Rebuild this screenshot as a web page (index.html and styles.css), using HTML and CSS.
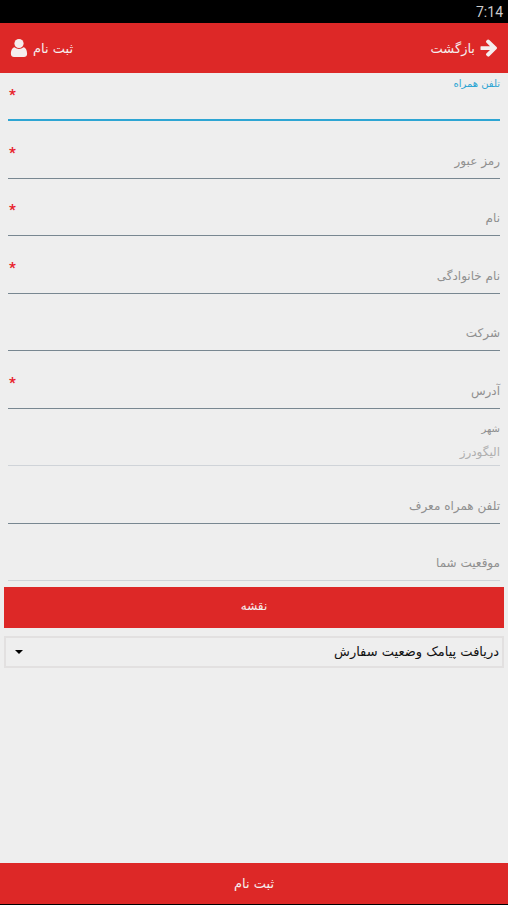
FILE: index.html
```
<!DOCTYPE html>
<html lang="fa" dir="rtl">
<head>
  <meta charset="UTF-8" />
  <meta name="viewport" content="width=device-width, initial-scale=1" />
  <title>ثبت نام</title>
  <link rel="stylesheet" href="styles.css">
</head>
<body>
  <div class="status-bar">7:14</div>

  <header>
    <a class="header-link" href="#back">
      <svg class="icon" viewBox="0 0 18 20" aria-hidden="true">
        <path d="M1 8.200H10L6.300 4.600Q5.600 3.700 6.300 2.800L7.400 1.800Q8.400 1.200 9.300 2L16.600 9.100Q17.500 10 16.600 11L9.300 18.200Q8.400 19 7.400 18.300L6.300 17.200Q5.600 16.300 6.300 15.400L10 12H1Q0.500 12 0.500 11.500V8.700Q0.500 8.200 1 8.200Z" fill="currentColor" />
      </svg>
      <span>بازگشت</span>
    </a>
    <h1 class="header-title">
      <span>ثبت نام</span>
      <svg class="icon" viewBox="0 0 18 20" aria-hidden="true">
        <path fill="currentColor" d="M4.600 9.200C2 9.600 0.900 12.500 0.900 15.800C0.900 18 2.300 18.900 4 18.900H14C15.700 18.900 17.100 18 17.100 15.800C17.100 12.500 16 9.600 13.400 9.200C12 10.300 10.600 10.900 9 10.900S6 10.300 4.600 9.200Z" />
        <circle cx="9" cy="5.500" r="4.600" fill="currentColor" />
      </svg>
    </h1>
  </header>

  <form id="register">
    <div class="fields">
      <div class="field active required">
        <label for="mobile">تلفن همراه</label>
        <input type="tel" id="mobile" />
      </div>
      <div class="field required">
        <label for="password">رمز عبور</label>
        <input type="password" id="password" />
      </div>
      <div class="field required">
        <label for="first-name">نام</label>
        <input type="text" id="first-name" />
      </div>
      <div class="field required">
        <label for="last-name">نام خانوادگی</label>
        <input type="text" id="last-name" />
      </div>
      <div class="field">
        <label for="company">شرکت</label>
        <input type="text" id="company" />
      </div>
      <div class="field required">
        <label for="address">آدرس</label>
        <input type="text" id="address" />
      </div>
      <div class="field filled disabled">
        <label for="city">شهر</label>
        <input type="text" id="city" value="الیگودرز" disabled />
      </div>
      <div class="field">
        <label for="referrer">تلفن همراه معرف</label>
        <input type="tel" id="referrer" />
      </div>
      <div class="field disabled">
        <label for="location">موقعیت شما</label>
        <input type="text" id="location" disabled />
      </div>
    </div>

    <button type="button" class="map-btn">نقشه</button>

    <div class="select-box">
      <select id="sms" aria-label="دریافت پیامک">
        <option>دریافت پیامک وضعیت سفارش</option>
      </select>
    </div>
  </form>

  <button type="submit" form="register" class="submit-btn">ثبت نام</button>
</body>
</html>
```

FILE: styles.css
```
* {
  box-sizing: border-box;
}
body {
  margin: 0;
  min-height: 100vh;
  display: flex;
  flex-direction: column;
  font-family: "DejaVu Sans", sans-serif;
  font-size: 13px;
  background: #eee;
  color: #111;
}
input, select, button {
  font: inherit;
}
.status-bar {
  height: 23px;
  padding: 0 5px;
  direction: ltr;
  text-align: right;
  font-family: Roboto, sans-serif;
  font-size: 14px;
  line-height: 25px;
  background: #000;
  color: #ccc;
}
header {
  display: flex;
  justify-content: space-between;
  align-items: center;
  height: 50px;
  padding: 0 10px;
  background: #dd2827;
  color: #f5eeee;
}
.header-link, .header-title {
  display: flex;
  align-items: center;
  gap: 5px;
  margin: 0;
  font-size: 13px;
  font-weight: normal;
  color: inherit;
  text-decoration: none;
}
.icon {
  width: 18px;
  height: 20px;
}
#register {
  flex: 1;
  padding: 0 4px;
}

/* --- Fields --- */
.fields {
  display: grid;
  grid-template-rows: 48px repeat(8, 1fr);
  min-height: 508px;
  padding: 0 4px;
  font-size: 12px;
}
.field {
  position: relative;
  display: flex;
  align-items: flex-end;
}
.field input {
  width: 100%;
  height: 28px;
  padding: 0;
  border: 0;
  border-bottom: 1px solid #788791;
  border-radius: 0;
  background: none;
  color: #111;
  outline: none;
}
/* label rests on the input until the field is active or filled */
.field label {
  position: absolute;
  bottom: 8px;
  right: 0;
  line-height: 20px;
  color: #909090;
}
.field.active label, .field.filled label {
  bottom: 27px;
  font-size: 10px;
}
.field.active label {
  color: #2da5d3;
}
.field.active input {
  border-bottom: 2px solid #2da5d3;
}
.field.disabled input {
  border-bottom-color: #cfd3d8;
  color: #b0b0b0;
}
.field.required::after {
  content: "*";
  position: absolute;
  left: 1px;
  bottom: 16px;
  font-family: Roboto, sans-serif;
  font-size: 15px;
  font-weight: bold;
  line-height: 20px;
  color: #e8202a;
}

/* --- Buttons --- */
.map-btn, .submit-btn {
  display: block;
  width: 100%;
  padding: 0;
  border: 0;
  background: #dd2827;
  color: #f5eeee;
}
.map-btn {
  height: 41px;
  margin: 6px 0 8px;
  padding-bottom: 4px;
  font-size: 12px;
}
.submit-btn {
  height: 42px;
  border-bottom: 1px solid #000;
}

.select-box {
  position: relative;
}
.select-box select {
  display: block;
  width: 100%;
  height: 32px;
  padding: 0 3px 2px;
  border: 2px solid #e2e0e0;
  appearance: none;
  background: none;
  color: #111;
}
.select-box::after {
  content: "";
  position: absolute;
  left: 11px;
  top: 14px;
  border: 4px solid transparent;
  border-top-color: #000;
  border-bottom: 0;
  pointer-events: none;
}
```
